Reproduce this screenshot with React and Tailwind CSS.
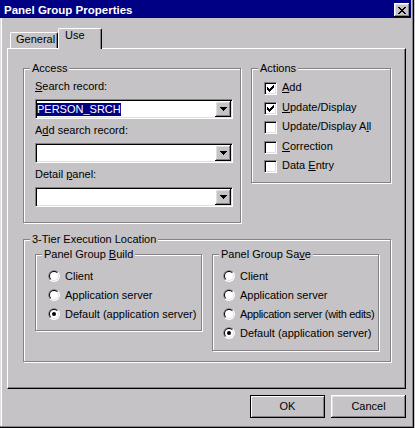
import { useId } from 'react';

const raised =
  'shadow-[inset_-1px_-1px_0_#000,inset_1px_1px_0_#fff,inset_-2px_-2px_0_#848284,inset_2px_2px_0_#dedfde]';
const sunken =
  'border border-t-[#848284] border-l-[#848284] border-r-white border-b-white shadow-[inset_1px_1px_0_#000,inset_-1px_-1px_0_#dedfde]';

function Group({ title, className = '', children }) {
  return (
    <div
      className={`relative border border-[#848284] shadow-[inset_1px_1px_0_#fff,1px_1px_0_#fff] ${className}`}
    >
      <span className="absolute -top-[7px] left-[6px] bg-[#c6c3c6] px-[2px] leading-[13px] whitespace-nowrap">
        {title}
      </span>
      {children}
    </div>
  );
}

function Combo({ value }) {
  return (
    <div className={`flex h-[20px] w-full items-center bg-white p-px ${sunken}`}>
      <div className="flex-1 flex items-center">
        {value && (
          <span className="bg-[#000084] text-white leading-[13px]">{value}</span>
        )}
      </div>
      <div className={`flex h-[16px] w-[16px] shrink-0 items-center justify-center bg-[#c6c3c6] ${raised}`}>
        <svg width="7" height="4" viewBox="0 0 7 4" shapeRendering="crispEdges">
          <path d="M0 0h7v1H0z M1 1h5v1H1z M2 2h3v1H2z M3 3h1v1H3z" fill="#000" />
        </svg>
      </div>
    </div>
  );
}

function Checkbox({ checked, children }) {
  return (
    <div className="flex h-[19.5px] items-start gap-[5px]">
      <div className={`flex h-[13px] w-[13px] shrink-0 items-center justify-center bg-white ${sunken}`}>
        {checked && (
          <svg width="7" height="7" viewBox="0 0 7 7" shapeRendering="crispEdges">
            <path
              d="M0 2h1v3H0z M1 3h1v3H1z M2 4h1v3H2z M3 3h1v3H3z M4 2h1v3H4z M5 1h1v3H5z M6 0h1v3H6z"
              fill="#000"
            />
          </svg>
        )}
      </div>
      <span className="-mt-[1px] leading-[13px] whitespace-nowrap">{children}</span>
    </div>
  );
}

function Radio({ checked, tight, children }) {
  const id = useId().replace(/:/g, '');
  return (
    <div className="flex h-[19px] items-start gap-[5px]">
      <svg width="12" height="12" viewBox="0 0 12 12" className="shrink-0">
        <defs>
          <clipPath id={`tl${id}`}>
            <polygon points="0,0 12,0 0,12" />
          </clipPath>
        </defs>
        <circle cx="6" cy="6" r="6" fill="#fff" />
        <circle cx="6" cy="6" r="6" fill="#848284" clipPath={`url(#tl${id})`} />
        <circle cx="6" cy="6" r="5" fill="#dedfde" />
        <circle cx="6" cy="6" r="5" fill="#000" clipPath={`url(#tl${id})`} />
        <circle cx="6" cy="6" r="4" fill="#fff" />
        {checked && <circle cx="6" cy="6" r="2" fill="#000" />}
      </svg>
      <span className={`leading-[12px] whitespace-nowrap ${tight ? 'tracking-[-0.3px]' : ''}`}>
        {children}
      </span>
    </div>
  );
}

export default function App() {
  return (
    <div className="w-[415px] h-[428px] bg-[#c6c3c6] text-[11px] text-black font-['Liberation_Sans',Arial,sans-serif]">
      <div className="w-[414px] h-[428px] pr-[3px] shadow-[inset_-1px_-1px_0_#000,inset_-2px_-2px_0_#848284,inset_1px_0_0_#dedfde,inset_2px_0_0_#fff]">
        {/* title bar */}
        <div className="flex h-[18px] w-[411px] items-start justify-between bg-[#000084] pl-[4px]">
          <span className="mt-[3px] text-[11.5px] font-bold leading-[14px] text-white">
            Panel Group Properties
          </span>
          <button
            className={`mt-[3px] mr-[1px] flex h-[14px] w-[16px] items-center justify-center bg-[#c6c3c6] ${raised}`}
          >
            <svg width="8" height="7" viewBox="0 0 8 7" shapeRendering="crispEdges">
              <path
                d="M0 0h2v1H0z M6 0h2v1H6z M1 1h2v1H1z M5 1h2v1H5z M2 2h4v1H2z M3 3h2v1H3z M2 4h4v1H2z M1 5h2v1H1z M5 5h2v1H5z M0 6h2v1H0z M6 6h2v1H6z"
                fill="#000"
              />
            </svg>
          </button>
        </div>

        <div className="pl-[7px] pt-[10px]">
          {/* tabs */}
          <div className="flex h-[20px] items-end">
            <div className="ml-[3px] h-[16px] w-[48px] rounded-t-[2px] border-l border-t border-r border-l-white border-t-white border-r-black pl-[5px] leading-[13px] whitespace-nowrap shadow-[inset_-1px_0_0_#848284]">
              General
            </div>
            <div className="relative z-10 -mb-px h-[21px] w-[44px] rounded-t-[2px] border-l border-t border-r border-l-white border-t-white border-r-black bg-[#c6c3c6] pl-[6px] leading-[13px] shadow-[inset_-1px_0_0_#848284]">
              Use
            </div>
          </div>

          {/* tab panel */}
          <div className="h-[341px] w-[399px] border-l border-t border-r border-b border-l-white border-t-white border-r-black border-b-black pl-[15px] pt-[19px] shadow-[inset_-1px_-1px_0_#848284]">
            <div className="flex items-start gap-[10px]">
              <Group title="Access" className="h-[155px] w-[218px] pl-[11px] pr-[7px] pt-[11px]">
                <div className="flex flex-col">
                  <span className="leading-[13px]">
                    <u>S</u>earch record:
                  </span>
                  <div className="mt-[6px]">
                    <Combo value="PERSON_SRCH" />
                  </div>
                  <span className="mt-[5px] leading-[13px]">
                    A<u>d</u>d search record:
                  </span>
                  <div className="mt-[6px]">
                    <Combo />
                  </div>
                  <span className="mt-[5px] leading-[13px]">
                    Detail <u>p</u>anel:
                  </span>
                  <div className="mt-[6px]">
                    <Combo />
                  </div>
                </div>
              </Group>

              <Group title="Actions" className="h-[115px] w-[140px] pl-[12px] pt-[13px]">
                <Checkbox checked>
                  <u>A</u>dd
                </Checkbox>
                <Checkbox checked>
                  <u>U</u>pdate/Display
                </Checkbox>
                <Checkbox>
                  Update/Display A<u>l</u>l
                </Checkbox>
                <Checkbox>
                  <u>C</u>orrection
                </Checkbox>
                <Checkbox>
                  Data <u>E</u>ntry
                </Checkbox>
              </Group>
            </div>

            <Group
              title="3-Tier Execution Location"
              className="mt-[16px] flex h-[123px] w-[368px] items-start gap-[10px] pl-[11px] pt-[14px]"
            >
              <Group
                title={
                  <>
                    Panel Group <u>B</u>uild
                  </>
                }
                className="h-[77px] w-[167px] pl-[12px] pt-[15px]"
              >
                <Radio>Client</Radio>
                <Radio>Application server</Radio>
                <Radio checked>Default (application server)</Radio>
              </Group>
              <Group
                title={
                  <>
                    Panel Group Sa<u>v</u>e
                  </>
                }
                className="h-[97px] w-[167px] pl-[10px] pt-[15px]"
              >
                <Radio>Client</Radio>
                <Radio>Application server</Radio>
                <Radio tight>Application server (with edits)</Radio>
                <Radio checked>Default (application server)</Radio>
              </Group>
            </Group>
          </div>

          {/* buttons */}
          <div className="mt-[6px] flex w-[399px] justify-end gap-[6px]">
            <button className="flex h-[23px] w-[75px] items-center justify-center border border-black bg-[#c6c3c6] shadow-[inset_1px_1px_0_#fff,inset_-1px_-1px_0_#848284]">
              OK
            </button>
            <button
              className={`flex h-[23px] w-[75px] items-center justify-center bg-[#c6c3c6] ${raised}`}
            >
              Cancel
            </button>
          </div>
        </div>
      </div>
    </div>
  );
}
